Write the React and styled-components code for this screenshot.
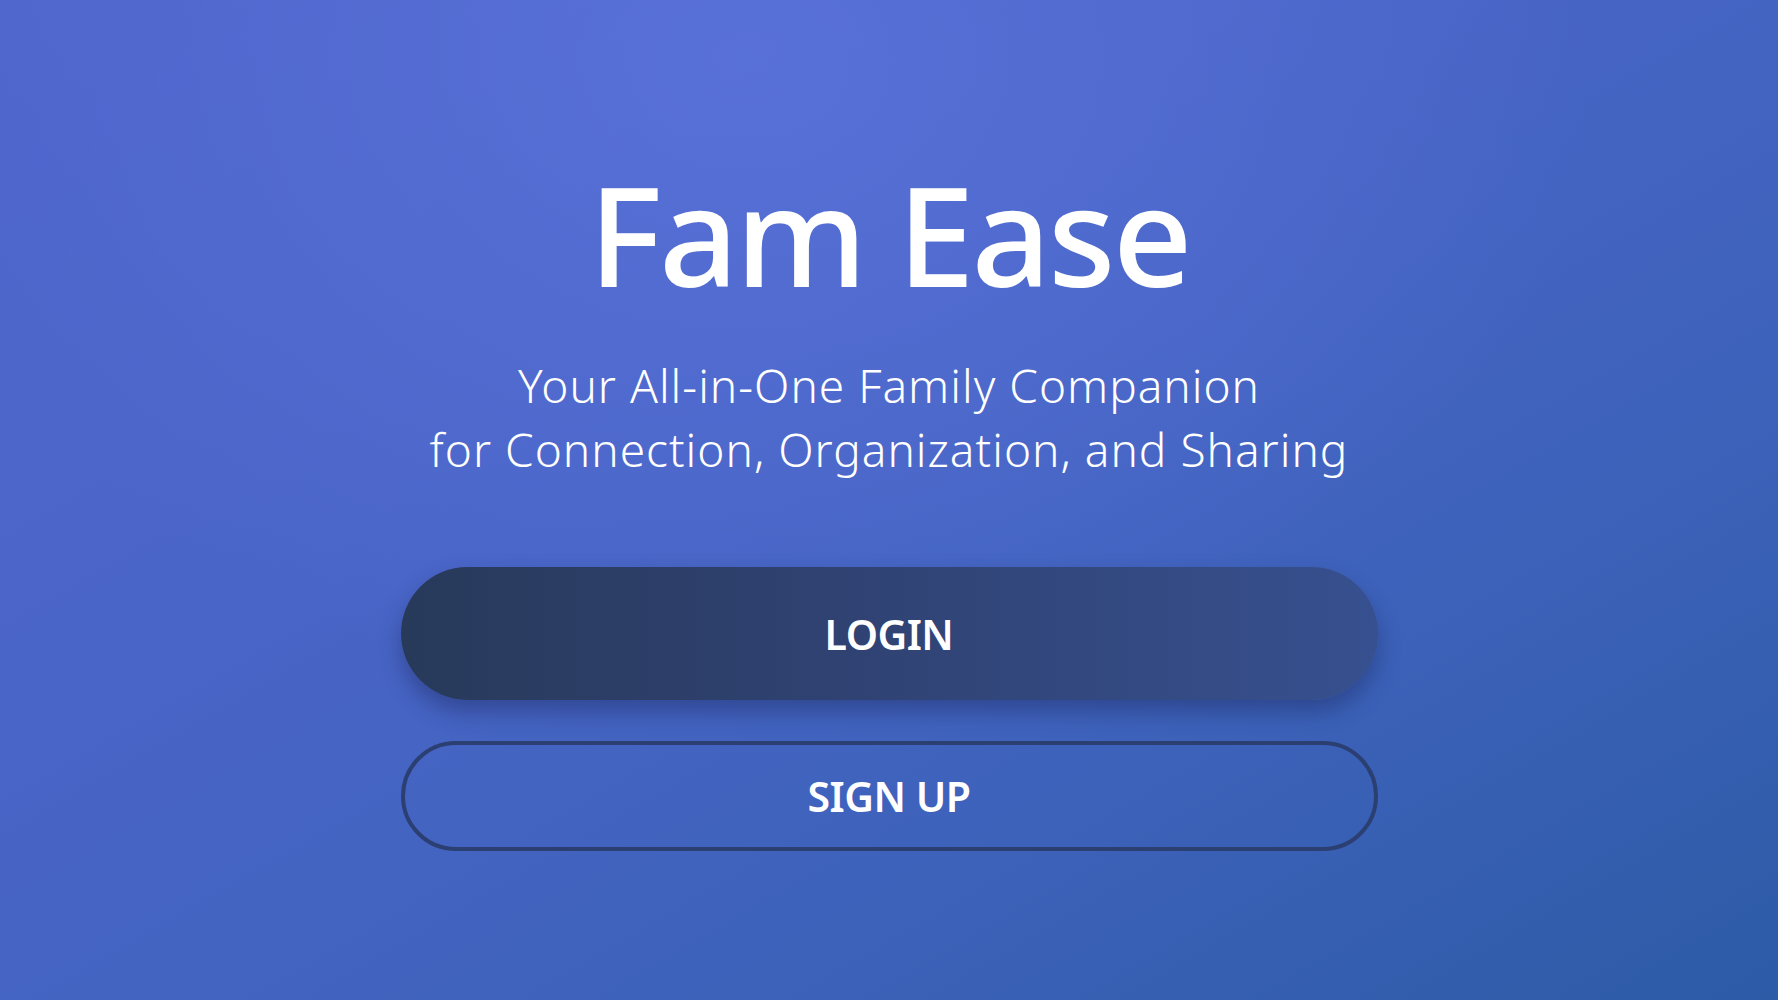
import React from "react";
import styled, { createGlobalStyle } from "styled-components";

const GlobalStyle = createGlobalStyle`
  html, body {
    margin: 0;
    padding: 0;
    height: 100%;
  }
  #root {
    height: 100%;
  }
  body {
    font-family: "Noto Sans", "Open Sans", sans-serif;
  }
`;

function App() {
  return (
    <>
      <GlobalStyle />
      <Page>
        <Hero>
          <Title>Fam Ease</Title>
          <Subtitle>
            Your All-in-One Family Companion
            <br />
            for Connection, Organization, and Sharing
          </Subtitle>
        </Hero>
        <Actions>
          <Button $variant="solid">LOGIN</Button>
          <Button $variant="outline">SIGN UP</Button>
        </Actions>
      </Page>
    </>
  );
}

export default App;

const Page = styled.div`
  width: 100%;
  height: 1000px;
  box-sizing: border-box;
  padding-top: 164px;
  display: flex;
  flex-direction: column;
  align-items: center;
  color: #ffffff;
  background:
    radial-gradient(ellipse 850px 650px at 42% 6%, rgba(90, 114, 218, 0.85) 0%, rgba(90, 114, 218, 0) 100%),
    linear-gradient(150deg, #4f66cc 0%, #4a65c8 35%, #3f63bd 65%, #2d5ba6 100%);
  overflow: hidden;
`;

const Hero = styled.div`
  display: flex;
  flex-direction: column;
  align-items: center;
  text-align: center;
`;

const Title = styled.h1`
  margin: 0;
  font-size: 139px;
  line-height: 139px;
  font-weight: 500;
  letter-spacing: -3px;
`;

const Subtitle = styled.p`
  margin: 50px 0 0;
  font-size: 46px;
  line-height: 64px;
  font-weight: 300;
  letter-spacing: 1px;
`;

const Actions = styled.div`
  margin-top: 86px;
  width: 977px;
  display: flex;
  flex-direction: column;
  gap: 41px;
`;

const Button = styled.button`
  width: 100%;
  box-sizing: border-box;
  border-radius: 999px;
  font-family: "Noto Sans", "Open Sans", sans-serif;
  font-size: 41px;
  font-weight: 600;
  color: #ffffff;
  cursor: pointer;
  letter-spacing: -0.5px;
  height: ${(p) => (p.$variant === "solid" ? "133px" : "110px")};
  border: ${(p) => (p.$variant === "solid" ? "none" : "4px solid #2b3f72")};
  background: ${(p) =>
    p.$variant === "solid"
      ? "linear-gradient(90deg, #283a5a 0%, #2f4272 45%, #37508f 100%)"
      : "transparent"};
  box-shadow: ${(p) =>
    p.$variant === "solid" ? "0 12px 22px rgba(28, 40, 96, 0.45)" : "none"};
`;
